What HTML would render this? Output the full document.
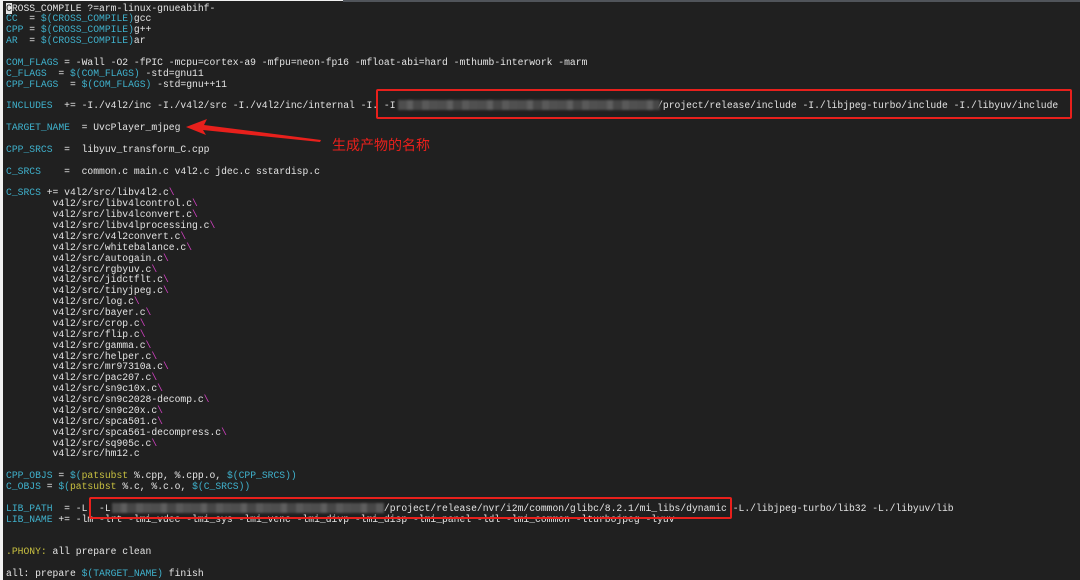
<!DOCTYPE html>
<html><head><meta charset="utf-8"><style>
html,body{margin:0;padding:0;}
body{width:1080px;height:580px;background:#202020;position:relative;overflow:hidden;}
pre{position:absolute;left:6px;top:3.5px;margin:0;font-family:"Liberation Mono","DejaVu Sans Mono",monospace;font-size:9.7px;line-height:10.87px;color:#e4e4e4;white-space:pre;}
.c{color:#3fb1cc}.m{color:#d040c0}.y{color:#c8c040}.cur{background:#e4e4e4;color:#202020}
.blur{position:absolute;height:10px;background:repeating-linear-gradient(90deg,#4e4e4e 0 9px,#5e5e5e 9px 15px,#474747 15px 24px,#595959 24px 31px,#505050 31px 40px);filter:blur(1px)}
.box{position:absolute;border:2px solid #e8201c;border-radius:2px;}
</style></head><body>
<div style="position:absolute;left:0;top:0;width:3px;height:580px;background:#f2f2f2"></div>
<div style="position:absolute;left:0;top:0;width:343px;height:1px;background:#f2f2f2"></div>
<div style="position:absolute;left:343px;top:0;width:737px;height:2px;background:#50545a"></div>
<pre><span class="cur">C</span>ROSS_COMPILE ?=arm-linux-gnueabihf-
<span class="c">CC</span>  = <span class="c">$(CROSS_COMPILE)</span>gcc
<span class="c">CPP</span> = <span class="c">$(CROSS_COMPILE)</span>g++
<span class="c">AR</span>  = <span class="c">$(CROSS_COMPILE)</span>ar

<span class="c">COM_FLAGS</span> = -Wall -O2 -fPIC -mcpu=cortex-a9 -mfpu=neon-fp16 -mfloat-abi=hard -mthumb-interwork -marm
<span class="c">C_FLAGS</span>  = <span class="c">$(COM_FLAGS)</span> -std=gnu11
<span class="c">CPP_FLAGS</span>  = <span class="c">$(COM_FLAGS)</span> -std=gnu++11

<span class="c">INCLUDES</span>  += -I./v4l2/inc -I./v4l2/src -I./v4l2/inc/internal -I. -I                                             /project/release/include -I./libjpeg-turbo/include -I./libyuv/include

<span class="c">TARGET_NAME</span>  = UvcPlayer_mjpeg

<span class="c">CPP_SRCS</span>  =  libyuv_transform_C.cpp

<span class="c">C_SRCS</span>    =  common.c main.c v4l2.c jdec.c sstardisp.c

<span class="c">C_SRCS</span> += v4l2/src/libv4l2.c<span class="m">\</span>
        v4l2/src/libv4lcontrol.c<span class="m">\</span>
        v4l2/src/libv4lconvert.c<span class="m">\</span>
        v4l2/src/libv4lprocessing.c<span class="m">\</span>
        v4l2/src/v4l2convert.c<span class="m">\</span>
        v4l2/src/whitebalance.c<span class="m">\</span>
        v4l2/src/autogain.c<span class="m">\</span>
        v4l2/src/rgbyuv.c<span class="m">\</span>
        v4l2/src/jidctflt.c<span class="m">\</span>
        v4l2/src/tinyjpeg.c<span class="m">\</span>
        v4l2/src/log.c<span class="m">\</span>
        v4l2/src/bayer.c<span class="m">\</span>
        v4l2/src/crop.c<span class="m">\</span>
        v4l2/src/flip.c<span class="m">\</span>
        v4l2/src/gamma.c<span class="m">\</span>
        v4l2/src/helper.c<span class="m">\</span>
        v4l2/src/mr97310a.c<span class="m">\</span>
        v4l2/src/pac207.c<span class="m">\</span>
        v4l2/src/sn9c10x.c<span class="m">\</span>
        v4l2/src/sn9c2028-decomp.c<span class="m">\</span>
        v4l2/src/sn9c20x.c<span class="m">\</span>
        v4l2/src/spca501.c<span class="m">\</span>
        v4l2/src/spca561-decompress.c<span class="m">\</span>
        v4l2/src/sq905c.c<span class="m">\</span>
        v4l2/src/hm12.c

<span class="c">CPP_OBJS</span> = <span class="c">$(</span><span class="y">patsubst</span> %.cpp, %.cpp.o, <span class="c">$(CPP_SRCS)</span><span class="c">)</span>
<span class="c">C_OBJS</span> = <span class="c">$(</span><span class="y">patsubst</span> %.c, %.c.o, <span class="c">$(C_SRCS)</span><span class="c">)</span>

<span class="c">LIB_PATH</span>  = -L  -L                                               /project/release/nvr/i2m/common/glibc/8.2.1/mi_libs/dynamic -L./libjpeg-turbo/lib32 -L./libyuv/lib
<span class="c">LIB_NAME</span> += -lm -lrt -lmi_vdec -lmi_sys -lmi_venc -lmi_divp -lmi_disp -lmi_panel -ldl -lmi_common -lturbojpeg -lyuv


<span class="y">.PHONY:</span> all prepare clean

all: prepare <span class="c">$(TARGET_NAME)</span> finish</pre>
<div class="blur" style="left:398px;top:100px;width:262px;"></div>
<div class="blur" style="left:112px;top:503px;width:272px;"></div>
<div class="box" style="left:376px;top:89px;width:692px;height:26px;"></div>
<div class="box" style="left:89px;top:497px;width:639px;height:18px;"></div>
<svg style="position:absolute;left:0;top:0" width="1080" height="580">
<polygon points="186,127 207,119 204,125 321,140 320,142 203,130 206,135" fill="#e8201c"/>
</svg>
<div style="position:absolute;left:332px;top:135px;font-family:'Liberation Sans','Noto Sans CJK SC',sans-serif;font-size:14px;color:#e8201c;">生成产物的名称</div>
</body></html>
